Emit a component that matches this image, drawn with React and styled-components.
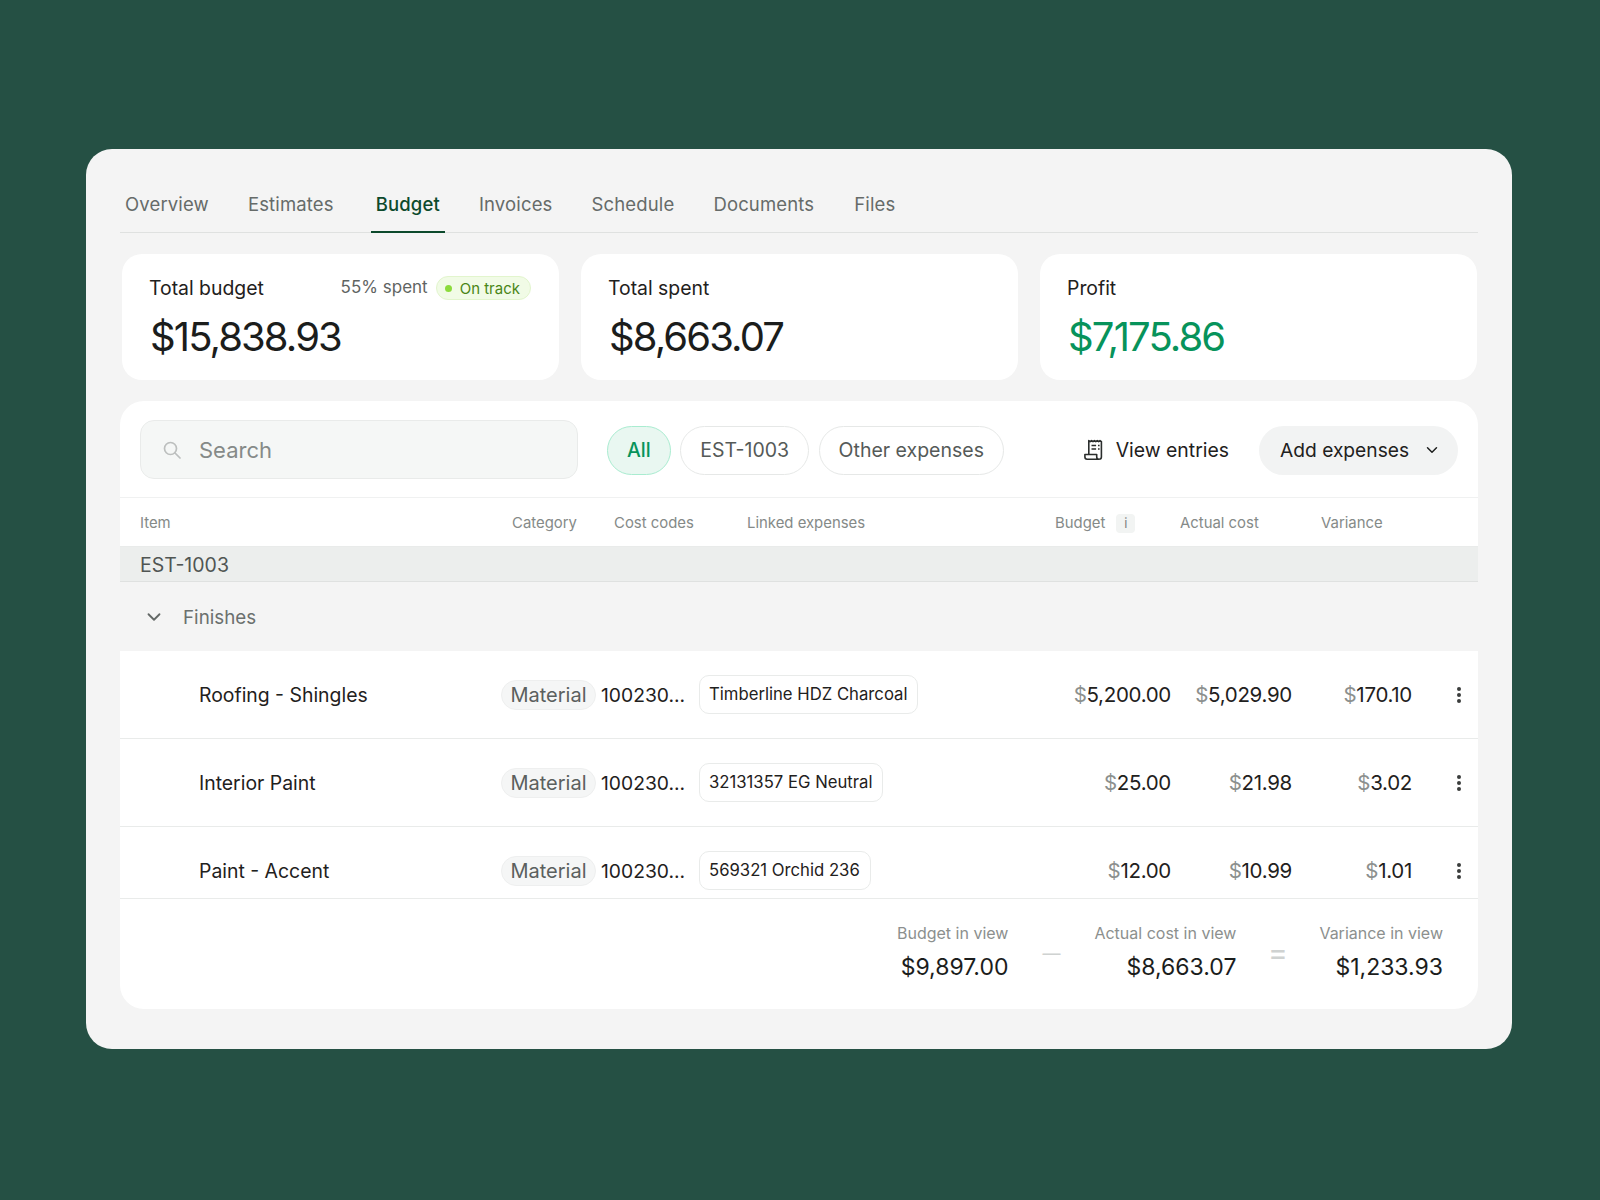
import styled, { createGlobalStyle } from 'styled-components';
import { ChevronDown } from 'lucide-react';

const GlobalStyle = createGlobalStyle`
  html, body {
    margin: 0;
    padding: 0;
    background: #255044;
  }
  body {
    font-family: Inter, "Noto Sans", sans-serif;
    color: #1b1d1c;
    -webkit-font-smoothing: antialiased;
  }
  * { box-sizing: border-box; }
`;

const Page = styled.div`
  width: 1600px;
  height: 1200px;
  padding: 149px 88px 0 86px;
`;

const Shell = styled.div`
  width: 1426px;
  height: 900px;
  padding: 24px 34px 0 34px;
  background: #f4f4f4;
  border-radius: 26px;
  display: flex;
  flex-direction: column;
`;

const Tabs = styled.nav`
  display: flex;
  height: 60px;
  border-bottom: 1.5px solid #dfe1e0;
`;

const Tab = styled.div`
  height: 60px;
  padding: 18px 5px 0;
  margin-right: ${(p) => p.$gap}px;
  font-size: 18.5px;
  line-height: 26px;
  letter-spacing: 0.15px;
  color: ${(p) => (p.$active ? '#0c4a2c' : '#666b69')};
  font-weight: ${(p) => (p.$active ? 500 : 400)};
  border-bottom: ${(p) => (p.$active ? '2.5px solid #0c4a2c' : 'none')};
`;

const Stats = styled.section`
  display: grid;
  grid-template-columns: repeat(3, 437px);
  column-gap: 22px;
  margin: 21px 0 0 2px;
`;

const StatCard = styled.div`
  height: 126px;
  padding: 21px 28px 0 27px;
  background: #fff;
  border-radius: 20px;
`;

const StatTop = styled.div`
  display: flex;
  align-items: center;
  height: 26px;
`;

const StatLabel = styled.div`
  font-size: 19.4px;
  line-height: 26px;
  color: #1f2120;
  flex: 1;
`;

const Spent = styled.span`
  margin: 0 8px 2px 0;
  font-size: 17px;
  color: #5f6462;
`;

const Badge = styled.span`
  display: flex;
  align-items: center;
  gap: 8px;
  height: 24px;
  padding: 0 10px 0 8px;
  font-size: 15px;
  color: #4a8616;
  background: #f1fbe6;
  border: 1px solid #e2f5cd;
  border-radius: 12px;
`;

const Dot = styled.i`
  width: 7px;
  height: 7px;
  border-radius: 50%;
  background: #8cdb3c;
`;

const StatValue = styled.div`
  margin: 11px 0 0 1px;
  font-size: 40px;
  line-height: 50px;
  letter-spacing: -1.9px;
  color: ${(p) => (p.$green ? '#07935b' : '#1b1d1c')};
`;

const Panel = styled.section`
  margin-top: 21px;
  height: 608px;
  background: #fff;
  border-radius: 24px;
  overflow: hidden;
`;

const Toolbar = styled.div`
  display: flex;
  align-items: center;
  height: 97px;
  padding: 2px 20px 0;
  border-bottom: 1px solid #f0f1f1;
`;

const SearchBox = styled.div`
  display: flex;
  align-items: center;
  gap: 18px;
  width: 438px;
  height: 59px;
  margin-top: -2px;
  padding: 1px 0 0 22px;
  background: #f5f7f6;
  border: 1px solid #e9ebea;
  border-radius: 14px;
  font-size: 22px;
  color: #858a88;
`;

const Chips = styled.div`
  display: flex;
  gap: 9.5px;
  margin-left: 29px;
  flex: 1;
`;

const Chip = styled.div`
  height: 49px;
  padding: 0 19px;
  display: flex;
  align-items: center;
  font-size: 19.5px;
  border-radius: 25px;
  font-weight: ${(p) => (p.$active ? 500 : 400)};
  color: ${(p) => (p.$active ? '#07935b' : '#555a58')};
  background: ${(p) => (p.$active ? '#e9f7f1' : '#fff')};
  border: 1px solid ${(p) => (p.$active ? '#a9ecd0' : '#e6e8e7')};
`;

const Ghost = styled.div`
  display: flex;
  align-items: center;
  gap: 12px;
  margin-right: 30px;
  font-size: 19.4px;
  color: #1f2120;
`;

const AddButton = styled.div`
  display: flex;
  align-items: center;
  gap: 14px;
  width: 199px;
  height: 49px;
  padding-left: 21px;
  border-radius: 25px;
  background: #f2f3f3;
  font-size: 19.2px;
  color: #1f2120;
`;

const columns = '381px 100px 98px 340px 132px 121px 120px 66px';

const HeadRow = styled.div`
  display: grid;
  grid-template-columns: ${columns};
  align-items: center;
  height: 49px;
  padding-top: 2px;
  border-bottom: 1px solid #e9ebea;
`;

const HeadCell = styled.div`
  display: flex;
  align-items: center;
  padding-left: ${(p) => p.$pad}px;
  font-size: 14.9px;
  color: #858a88;
`;

const InfoMark = styled.span`
  width: 19px;
  height: 19px;
  margin-left: 11px;
  border-radius: 4px;
  background: #f2f4f3;
  text-align: center;
  font-size: 13px;
  line-height: 19px;
  color: #7c8280;
`;

const GroupRow = styled.div`
  height: 35px;
  padding: 0 20px;
  background: #eceeed;
  border-bottom: 1.5px solid #dfe1e0;
  font-size: 19.5px;
  line-height: 37px;
  color: #505553;
`;

const SectionRow = styled.div`
  display: flex;
  align-items: center;
  gap: 18px;
  height: 69px;
  padding-left: 23px;
  background: #f4f4f4;
  color: #6b706e;
  svg { color: #636866; }
`;

const SectionName = styled.span`
  margin-top: 2px;
  font-size: 18.8px;
`;

const Body = styled.div`
  height: 248px;
  overflow: hidden;
  border-bottom: 1px solid #e9ebea;
`;

const Row = styled.div`
  display: grid;
  grid-template-columns: ${columns};
  align-items: center;
  height: 88px;
  border-bottom: 1px solid #e9ebea;
`;

const ItemName = styled.div`
  padding-left: 79px;
  font-size: 19.4px;
  color: #1f2120;
`;

const Category = styled.span`
  justify-self: start;
  width: 95px;
  height: 30px;
  border-radius: 15px;
  border: 1px solid #eeefef;
  background: #f5f6f6;
  text-align: center;
  font-size: 20px;
  line-height: 28px;
  color: #5b605e;
`;

const Code = styled.div`
  font-size: 19.3px;
  color: #1f2120;
`;

const Linked = styled.span`
  justify-self: start;
  height: 39px;
  padding: 0 10px 0 9px;
  border: 1px solid #e9ebea;
  border-radius: 10px;
  font-size: 16.7px;
  line-height: 37px;
  color: #1f2120;
`;

const Money = styled.div`
  text-align: right;
  font-size: 20.5px;
  letter-spacing: -0.3px;
  color: #1f2120;
  span { color: #8c908e; }
`;

const Kebab = styled.div`
  display: flex;
  justify-content: center;
  padding-left: 27px;
`;

const Footer = styled.div`
  display: flex;
  justify-content: flex-end;
  align-items: flex-start;
  padding: 24px 35px 0 0;
`;

const Total = styled.div`
  text-align: right;
`;

const TotalLabel = styled.div`
  font-size: 16px;
  line-height: 20px;
  color: #8c908e;
`;

const TotalValue = styled.div`
  margin-top: 9px;
  font-size: 23px;
  line-height: 30px;
  color: #1b1d1c;
`;

const Operator = styled.div`
  width: ${(p) => p.$width}px;
  padding-top: ${(p) => p.$top}px;
  text-align: center;
  font-size: ${(p) => p.$size}px;
  line-height: 30px;
  color: #cfd2d1;
`;

const tabs = [
  { name: 'Overview', gap: 29 },
  { name: 'Estimates', gap: 32 },
  { name: 'Budget', gap: 29, active: true },
  { name: 'Invoices', gap: 29 },
  { name: 'Schedule', gap: 29 },
  { name: 'Documents', gap: 30 },
  { name: 'Files', gap: 0 },
];

const rows = [
  { item: 'Roofing - Shingles', linked: 'Timberline HDZ Charcoal', budget: '5,200.00', actual: '5,029.90', variance: '170.10' },
  { item: 'Interior Paint', linked: '32131357 EG Neutral', budget: '25.00', actual: '21.98', variance: '3.02' },
  { item: 'Paint - Accent', linked: '569321 Orchid 236', budget: '12.00', actual: '10.99', variance: '1.01' },
];

const SearchIcon = () => (
  <svg width="18" height="18" viewBox="0 0 18 18" fill="none" stroke="#bcbfbe" strokeWidth="1.7" strokeLinecap="round">
    <circle cx="7.5" cy="7.5" r="6" />
    <path d="M12 12l5 5" />
  </svg>
);

const ReceiptIcon = () => (
  <svg width="20" height="22" viewBox="0 0 20 22" fill="none" stroke="#2b2e2d" strokeWidth="1.6" strokeLinejoin="round">
    <path d="M4.8 15.5V1.6l1.4 1 1.4-1 1.4 1 1.4-1 1.4 1 1.4-1 1.4 1 1.4-1 1.4 1V18a2.2 2.2 0 0 1-2.2 2.2" />
    <path d="M.9 15.5h11.8v2.5a2.2 2.2 0 0 0 2.2 2.2H3.1A2.2 2.2 0 0 1 .9 18z" />
    <path d="M7.5 6.5h4.6M7.5 10h4.6M14 6.5h1.6M14 10h1.6" />
  </svg>
);

const DotsIcon = () => (
  <svg width="6" height="18" viewBox="0 0 6 18" fill="#3a3d3c">
    <circle cx="3" cy="3" r="2" />
    <circle cx="3" cy="9" r="2" />
    <circle cx="3" cy="15" r="2" />
  </svg>
);

const Amount = ({ value }) => (
  <Money><span>$</span>{value}</Money>
);

export default function App() {
  return (
    <Page>
      <GlobalStyle />
      <Shell>
        <Tabs>
          {tabs.map((t) => (
            <Tab key={t.name} $gap={t.gap} $active={t.active}>{t.name}</Tab>
          ))}
        </Tabs>

        <Stats>
          <StatCard>
            <StatTop>
              <StatLabel>Total budget</StatLabel>
              <Spent>55% spent</Spent>
              <Badge><Dot />On track</Badge>
            </StatTop>
            <StatValue>$15,838.93</StatValue>
          </StatCard>
          <StatCard>
            <StatTop><StatLabel>Total spent</StatLabel></StatTop>
            <StatValue>$8,663.07</StatValue>
          </StatCard>
          <StatCard>
            <StatTop><StatLabel>Profit</StatLabel></StatTop>
            <StatValue $green>$7,175.86</StatValue>
          </StatCard>
        </Stats>

        <Panel>
          <Toolbar>
            <SearchBox>
              <SearchIcon />
              Search
            </SearchBox>
            <Chips>
              <Chip $active>All</Chip>
              <Chip>EST-1003</Chip>
              <Chip>Other expenses</Chip>
            </Chips>
            <Ghost><ReceiptIcon />View entries</Ghost>
            <AddButton>Add expenses <ChevronDown size={18} strokeWidth={2} /></AddButton>
          </Toolbar>

          <HeadRow>
            <HeadCell $pad={20}>Item</HeadCell>
            <HeadCell $pad={11}>Category</HeadCell>
            <HeadCell $pad={13}>Cost codes</HeadCell>
            <HeadCell $pad={48}>Linked expenses</HeadCell>
            <HeadCell $pad={16}>Budget<InfoMark>i</InfoMark></HeadCell>
            <HeadCell $pad={9}>Actual cost</HeadCell>
            <HeadCell $pad={29}>Variance</HeadCell>
            <HeadCell />
          </HeadRow>

          <GroupRow>EST-1003</GroupRow>
          <SectionRow>
            <ChevronDown size={22} strokeWidth={2} />
            <SectionName>Finishes</SectionName>
          </SectionRow>

          <Body>
            {rows.map((r) => (
              <Row key={r.item}>
                <ItemName>{r.item}</ItemName>
                <Category>Material</Category>
                <Code>100230...</Code>
                <Linked>{r.linked}</Linked>
                <Amount value={r.budget} />
                <Amount value={r.actual} />
                <Amount value={r.variance} />
                <Kebab><DotsIcon /></Kebab>
              </Row>
            ))}
          </Body>

          <Footer>
            <Total>
              <TotalLabel>Budget in view</TotalLabel>
              <TotalValue>$9,897.00</TotalValue>
            </Total>
            <Operator $width={86} $size={18} $top={16}>—</Operator>
            <Total>
              <TotalLabel>Actual cost in view</TotalLabel>
              <TotalValue>$8,663.07</TotalValue>
            </Total>
            <Operator $width={83} $size={30} $top={14}>=</Operator>
            <Total>
              <TotalLabel>Variance in view</TotalLabel>
              <TotalValue>$1,233.93</TotalValue>
            </Total>
          </Footer>
        </Panel>
      </Shell>
    </Page>
  );
}
